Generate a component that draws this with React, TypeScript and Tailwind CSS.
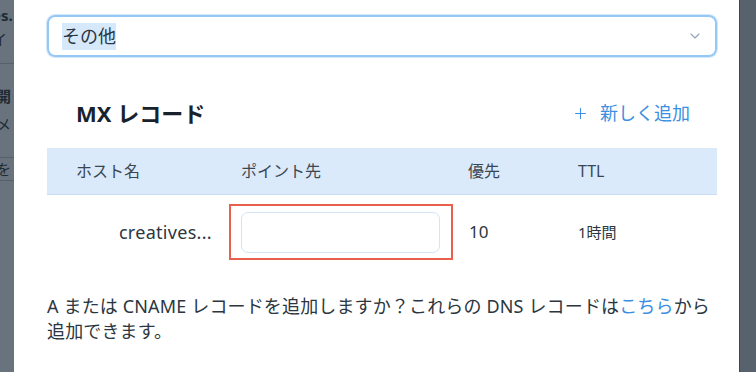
import { ChevronDown, Plus } from 'lucide-react';

const font = { fontFamily: '"Noto Sans", "Noto Sans CJK JP", sans-serif' };

export default function App() {
  return (
    <div className="w-[756px] h-[372px] flex bg-[#58626c] overflow-hidden" style={font}>
      {/* dimmed page behind */}
      <div className="w-[14px] shrink-0 flex flex-col text-[15px] text-[#1f2a33] bg-[#68737d] overflow-hidden">
        <div className="h-[63px] flex flex-col pt-[2px] leading-[26px] font-bold whitespace-nowrap -ml-[8px]">
          <span>es.</span>
          <span className="font-normal -mt-[2px]">イ</span>
        </div>
        <div className="h-[94px] border-t border-[#56606a] flex flex-col pt-[18px] leading-[28px] whitespace-nowrap -ml-[4px]">
          <span className="font-bold">開</span>
          <span>メ</span>
        </div>
        <div className="h-[24px] border-t border-[#56606a] border-b leading-[22px] -ml-[4px]">を</div>
        <div className="flex-1" />
      </div>

      {/* modal */}
      <div className="w-[725px] shrink-0 bg-white flex flex-col pl-[33px] pr-[22px] pt-[15px] text-[#2b3640]">
        <div className="h-[42px] rounded-[8px] border-2 border-[#96c8f5] shadow-[0_0_0_1px_#d3e7fb] flex items-center pl-[13px] pr-[12px]">
          <span className="bg-[#d6e9fb] text-[18px] leading-[27px] text-[#2b3640]">その他</span>
          <span className="flex-1" />
          <ChevronDown className="w-[16px] h-[16px] text-[#8da4bb]" strokeWidth={1.6} />
        </div>

        <div className="mt-[39px] flex items-center justify-between pl-[29px] pr-[27px] h-[34px]">
          <h2 className="text-[22px] font-bold text-[#18222c]">MX レコード</h2>
          <button className="flex items-center gap-[11px] text-[18px] text-[#3a8fe2]">
            <Plus className="w-[17px] h-[17px]" strokeWidth={1.5} />
            新しく追加
          </button>
        </div>

        <div className="mt-[18px] h-[47px] bg-[#dbeafb] flex items-center text-[16px] text-[#3a4753] border-b border-[#c9def5]">
          <span className="w-[194px] pl-[29px]">ホスト名</span>
          <span className="w-[227px]">ポイント先</span>
          <span className="w-[110px]">優先</span>
          <span>TTL</span>
        </div>

        <div className="h-[74px] flex items-center text-[#2b3640]">
          <span className="w-[166px] text-right text-[18px] tracking-[0.3px] pr-[1px]">creatives...</span>
          <div className="ml-[16px] w-[224px] h-[56px] border-2 border-[#e8604c] flex items-center pl-[10px]">
            <div className="w-[199px] h-[41px] rounded-[7px] border border-[#d3e4f6]" />
          </div>
          <span className="ml-[16px] w-[109px] text-[17px]">10</span>
          <span className="text-[15px]">1時間</span>
        </div>

        <p className="mt-[25px] text-[18px] leading-[25px] tracking-[0.15px] text-[#2b3640]">
          A または CNAME レコードを追加しますか？これらの DNS レコードは
          <span className="text-[#3a8fe2]">こちら</span>から追加できます。
        </p>
      </div>

      {/* page behind, right */}
      <div className="flex-1 border-l border-[#3f4850] bg-[#58626c]" />
    </div>
  );
}
